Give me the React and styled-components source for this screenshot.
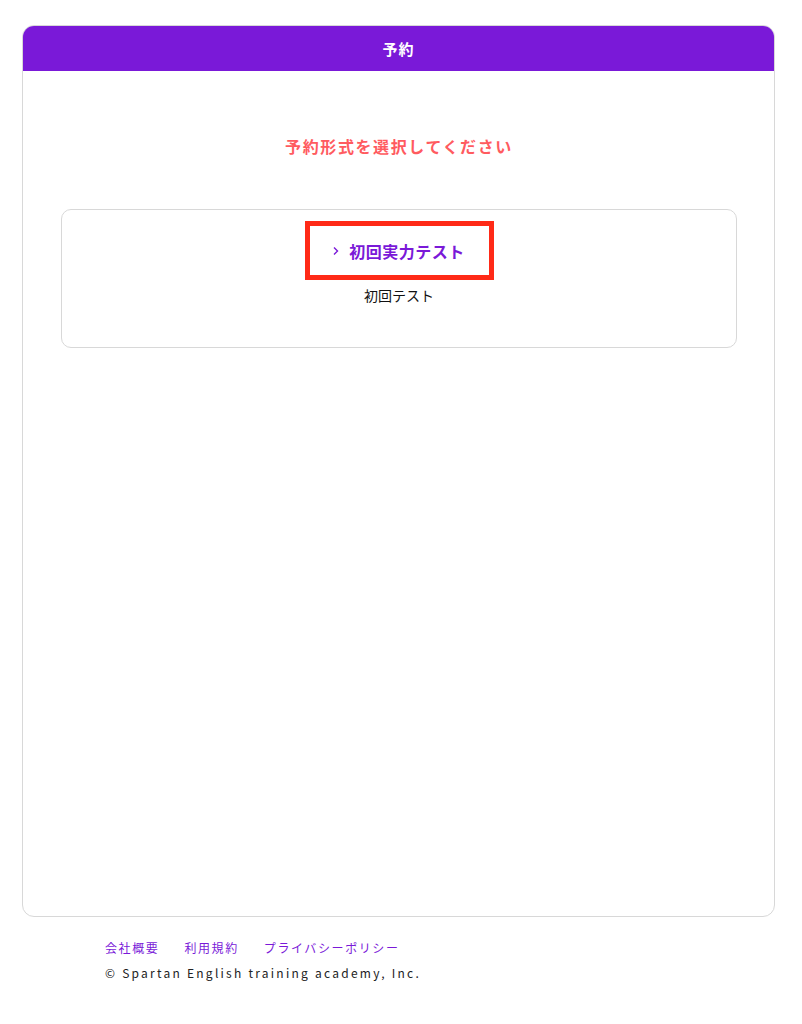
import React from "react";
import styled, { createGlobalStyle } from "styled-components";

const Global = createGlobalStyle`
  html, body { margin: 0; padding: 0; background: #fff; }
  body { font-family: "Noto Sans CJK JP", "Noto Sans", sans-serif; }
`;

const Page = styled.div`
  padding: 25px 27px 40px 22px;
`;

const Card = styled.section`
  height: 892px;
  box-sizing: border-box;
  border: 1px solid #d8d8d8;
  border-radius: 12px;
  overflow: hidden;
  display: flex;
  flex-direction: column;
`;

const Header = styled.header`
  height: 45px;
  background: #7a19d8;
  color: #fff;
  font-weight: 700;
  font-size: 15px;
  letter-spacing: 1px;
  display: flex;
  align-items: center;
  justify-content: center;
`;

const Body = styled.div`
  padding: 0 37px 0 38px;
  display: flex;
  flex-direction: column;
`;

const Title = styled.h2`
  margin: 63px 0 0;
  text-align: center;
  font-size: 16px;
  font-weight: 700;
  color: #ff5b5f;
  letter-spacing: 1.6px;
  line-height: 24px;
`;

const Option = styled.div`
  margin-top: 51px;
  height: 139px;
  box-sizing: border-box;
  border: 1px solid #d8d8d8;
  border-radius: 10px;
  display: flex;
  flex-direction: column;
  align-items: center;
  padding-top: 11px;
`;

const Highlight = styled.div`
  width: 189px;
  height: 59px;
  box-sizing: border-box;
  border: 5px solid #ff2a17;
  display: flex;
  align-items: center;
  justify-content: center;
  gap: 10px;
  color: #7a19d8;
  font-weight: 700;
  font-size: 16px;
  letter-spacing: 0.5px;
`;

const Chevron = styled.svg`
  width: 6px;
  height: 10px;
  flex: none;
`;

const Sub = styled.div`
  margin-top: 5px;
  font-size: 14px;
  color: #111;
  line-height: 20px;
`;

const Footer = styled.footer`
  padding: 22px 0 0 83px;
  display: flex;
  flex-direction: column;
  gap: 6px;
`;

const Links = styled.nav`
  display: flex;
  gap: 25px;
`;

const Link = styled.a`
  color: #7a19d8;
  font-size: 12px;
  letter-spacing: 1.6px;
  text-decoration: none;
  line-height: 18px;
`;

const Copy = styled.div`
  font-size: 12px;
  letter-spacing: 2.25px;
  color: #222;
  line-height: 20px;
`;

export default function App() {
  return (
    <Page>
      <Global />
      <Card>
        <Header>予約</Header>
        <Body>
          <Title>予約形式を選択してください</Title>
          <Option>
            <Highlight>
              <Chevron viewBox="0 0 6 10">
                <polyline points="1,1.5 4.5,5 1,8.5" fill="none" stroke="#7a19d8" strokeWidth="1.4" />
              </Chevron>
              <span>初回実力テスト</span>
            </Highlight>
            <Sub>初回テスト</Sub>
          </Option>
        </Body>
      </Card>
      <Footer>
        <Links>
          <Link href="#">会社概要</Link>
          <Link href="#">利用規約</Link>
          <Link href="#">プライバシーポリシー</Link>
        </Links>
        <Copy>© Spartan English training academy, Inc.</Copy>
      </Footer>
    </Page>
  );
}
